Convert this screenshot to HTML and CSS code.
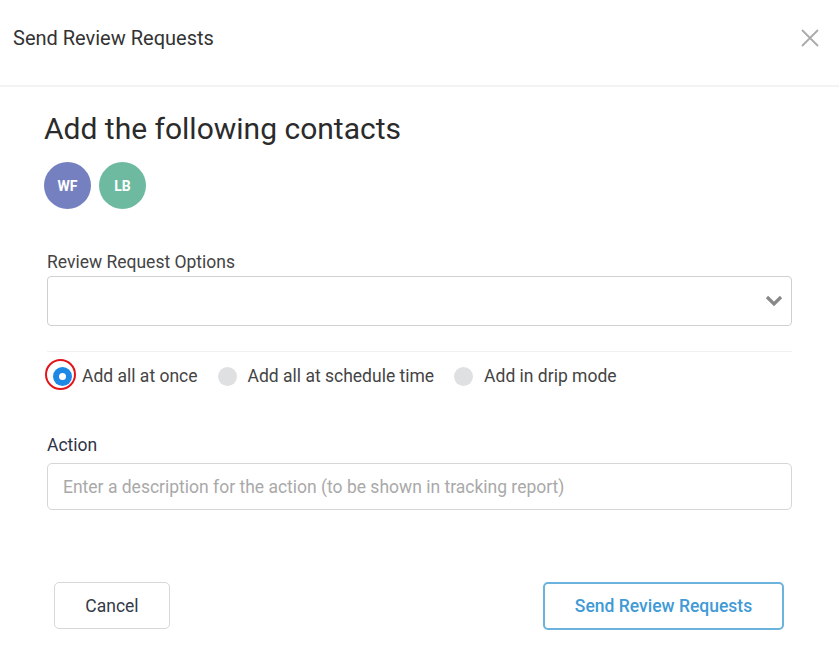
FILE: index.html
```html
<!DOCTYPE html>
<html lang="en">
<head>
    <meta charset="UTF-8">
    <meta name="viewport" content="width=device-width, initial-scale=1.0">
    <title>Send Review Requests</title>
    <link rel="stylesheet" href="styles.css">
</head>
<body>
    <div class="modal">
        <div class="modal-header">
            <h3>Send Review Requests</h3>
            <span class="close">
                <svg width="18" height="18" viewBox="0 0 18 18"><path d="M1 1L17 17M17 1L1 17" stroke="#aaa" stroke-width="1.8" fill="none"/></svg>
            </span>
        </div>

        <div class="modal-body">
            <h2>Add the following contacts</h2>
            <div class="avatars">
                <span class="avatar wf">WF</span>
                <span class="avatar lb">LB</span>
            </div>

            <label class="field-label">Review Request Options</label>
            <div class="select">
                <svg width="18" height="12" viewBox="0 0 18 12"><path d="M2 2L9 9L16 2" stroke="#888" stroke-width="3.2" fill="none"/></svg>
            </div>

            <div class="radios">
                <label class="radio checked"><span class="dot"></span>Add all at once</label>
                <label class="radio"><span class="dot"></span>Add all at schedule time</label>
                <label class="radio"><span class="dot"></span>Add in drip mode</label>
            </div>

            <label class="field-label dark">Action</label>
            <input type="text" class="text-input" placeholder="Enter a description for the action (to be shown in tracking report)">
        </div>

        <div class="modal-footer">
            <button class="btn">Cancel</button>
            <button class="btn primary">Send Review Requests</button>
        </div>
    </div>
</body>
</html>
```

FILE: styles.css
```css
body {
    margin: 0;
    font-family: 'Roboto', 'Liberation Sans', sans-serif;
    background: #fff;
    color: #333;
}
.modal {
    width: 839px;
}
.modal-header {
    height: 87px;
    border-bottom: 2px solid #f3f3f3;
    display: flex;
    align-items: center;
    justify-content: space-between;
    padding: 0 20px 10px 13px;
    box-sizing: border-box;
}
.modal-header h3 {
    margin: 0;
    font-size: 20px;
    font-weight: 400;
    color: #333;
}
.close {
    display: flex;
}
.modal-body {
    padding: 22px 47px 0 47px;
}
h2 {
    margin: 0 0 0 -3px;
    font-size: 30px;
    font-weight: 400;
    color: #2b2b2b;
    line-height: 40px;
}
.avatars {
    display: flex;
    gap: 8px;
    margin: 13px 0 0 -3px;
}
.avatar {
    width: 47px;
    height: 47px;
    border-radius: 50%;
    color: #fff;
    font-size: 14px;
    font-weight: 700;
    display: flex;
    align-items: center;
    justify-content: center;
}
.avatar.wf {
    background: #7580c0;
}
.avatar.lb {
    background: #6dbaa0;
}
.field-label {
    display: block;
    font-size: 17.5px;
    color: #444;
    margin-top: 43px;
    line-height: 20px;
}
.field-label.dark {
    color: #2d3446;
    margin-top: 47px;
}
.select {
    margin-top: 4px;
    height: 50px;
    border: 1px solid #d0d0d0;
    border-radius: 4px;
    box-sizing: border-box;
    display: flex;
    align-items: center;
    justify-content: flex-end;
    padding-right: 8px;
}
.radios {
    margin-top: 25px;
    border-top: 1px solid #f0f0f0;
    display: flex;
    align-items: center;
    padding-top: 12px;
    height: 24px;
}
.radio {
    display: flex;
    align-items: center;
    font-size: 17.5px;
    color: #444;
    margin-right: 20px;
}
.dot {
    width: 19px;
    height: 19px;
    border-radius: 50%;
    background: #dfe0e2;
    margin-right: 11px;
}
.radio.checked .dot {
    background: #1e88e5;
    position: relative;
    margin-left: 6px;
    margin-right: 10px;
}
.radio.checked .dot::before {
    content: "";
    position: absolute;
    left: 6px;
    top: 6px;
    width: 7px;
    height: 7px;
    border-radius: 50%;
    background: #fff;
}
.radio.checked .dot::after {
    content: "";
    position: absolute;
    left: -8px;
    top: -8px;
    width: 31px;
    height: 31px;
    border-radius: 50%;
    border: 2px solid #e3141b;
    box-sizing: border-box;
}
.text-input {
    display: block;
    width: 100%;
    box-sizing: border-box;
    margin-top: 8px;
    height: 47px;
    border: 1px solid #d6d6d6;
    border-radius: 5px;
    padding: 0 15px;
    font-family: inherit;
    font-size: 17.5px;
    color: #333;
}
.text-input::placeholder {
    color: #a9a9a9;
}
.modal-footer {
    display: flex;
    justify-content: space-between;
    padding: 72px 55px 0 54px;
}
.btn {
    height: 47px;
    padding: 0;
    background: #fff;
    border: 1px solid #d8d8d8;
    border-radius: 5px;
    font-family: inherit;
    font-size: 17.5px;
    color: #333a48;
    cursor: pointer;
    width: 116px;
}
.btn.primary {
    width: 241px;
    height: 48px;
    border: 2px solid #6bb3dd;
    color: #3f9ad6;
    font-weight: 500;
}
```
